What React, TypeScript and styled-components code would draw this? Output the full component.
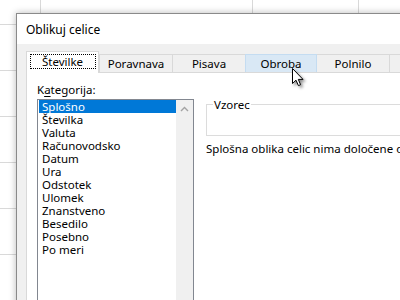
import styled, { createGlobalStyle } from "styled-components";

const GlobalStyle = createGlobalStyle`
  html, body {
    margin: 0;
    padding: 0;
    overflow: hidden;
    background: #ffffff;
  }
  body {
    font-family: "Noto Sans", "DejaVu Sans", sans-serif;
    font-size: 11.5px;
    color: #000000;
  }
`;

const Stage = styled.div`
  position: relative;
  width: 400px;
  height: 300px;
  overflow: hidden;
`;

const Sheet = styled.div`
  display: grid;
  grid-template-columns: 41px 212px 106px 106px;
  grid-template-rows: 25px repeat(6, 46px);
`;

const Cell = styled.div`
  border-right: 1px solid #d9d9d9;
  border-bottom: 1px solid #d9d9d9;
`;

const Window = styled.div`
  position: absolute;
  left: 16px;
  top: 13px;
  width: 430px;
  height: 320px;
  border: 1px solid #8a8a8a;
  background: #f0f0f0;
  box-shadow: 0 0 7px rgba(0, 0, 0, 0.28);
  overflow: hidden;
`;

const TitleBar = styled.div`
  height: 30px;
  background: #ffffff;
  display: flex;
  align-items: center;
  padding-left: 9px;
  font-size: 12px;
`;

const Body = styled.div`
  padding: 7px 0 0 9px;
`;

const TabStrip = styled.div`
  display: flex;
  align-items: flex-end;
  height: 21px;
`;

const Tab = styled.div<{ $w: number; $active?: boolean; $hover?: boolean; $overlap?: boolean }>`
  position: relative;
  flex-shrink: 0;
  box-sizing: border-box;
  width: ${(p) => p.$w}px;
  height: ${(p) => (p.$active ? 22 : 18)}px;
  margin-left: ${(p) => (p.$overlap ? -1 : 0)}px;
  margin-bottom: ${(p) => (p.$active ? -1 : 0)}px;
  z-index: ${(p) => (p.$active ? 2 : p.$hover ? 1 : 0)};
  border: 1px solid ${(p) => (p.$hover ? "#c4dcf1" : "#d9d9d9")};
  border-bottom: none;
  background: ${(p) => (p.$active ? "#ffffff" : p.$hover ? "#d9e8f5" : "#f0f0f0")};
  display: flex;
  align-items: center;
  justify-content: center;
  line-height: 13px;
`;

const FocusRect = styled.span`
  display: flex;
  align-items: center;
  justify-content: center;
  width: 66px;
  height: 15px;
  margin-top: -2px;
  border: 1px dotted #000000;
  box-sizing: border-box;
`;

const Panel = styled.div`
  position: relative;
  z-index: 1;
  height: 300px;
  background: #ffffff;
  border: 1px solid #d9d9d9;
  padding: 10px 0 0 10px;
  display: flex;
  gap: 12px;
`;

const LeftColumn = styled.div`
  display: flex;
  flex-direction: column;
`;

const Label = styled.div`
  line-height: 13px;
  height: 13px;

  u {
    text-decoration: underline;
    text-underline-offset: 2px;
  }
`;

const ListBox = styled.div`
  margin-top: 3px;
  width: 157px;
  height: 220px;
  box-sizing: border-box;
  border: 1px solid #828790;
  display: flex;
`;

const Items = styled.div`
  flex: 1;
  padding-left: 1px;
`;

const Item = styled.div<{ $selected?: boolean }>`
  height: 13px;
  line-height: 13px;
  padding-left: 3px;
  white-space: nowrap;
  background: ${(p) => (p.$selected ? "#0078d7" : "transparent")};
  color: ${(p) => (p.$selected ? "#ffffff" : "#000000")};
`;

const ScrollBar = styled.div`
  width: 17px;
  background: #f0f0f0;
`;

const ScrollButton = styled.div`
  height: 17px;
  display: flex;
  align-items: center;
  justify-content: center;
`;

const RightColumn = styled.div`
  flex: 1;
  display: flex;
  flex-direction: column;
`;

const GroupBox = styled.div`
  margin-top: 21px;
  height: 32px;
  box-sizing: border-box;
  border: 1px solid #dcdcdc;
`;

const Legend = styled.div`
  width: fit-content;
  margin: -7px 0 0 6px;
  padding: 0 1px;
  line-height: 13px;
  background: #ffffff;
`;

const Description = styled.div`
  margin-top: 6px;
  line-height: 13px;
  white-space: nowrap;
`;

const Cursor = styled.svg`
  position: absolute;
  z-index: 10;
  left: 291px;
  top: 67px;
  filter: drop-shadow(2px 2px 1.5px rgba(0, 0, 0, 0.45));
`;

const tabs = [
  { label: "Številke", w: 73 },
  { label: "Poravnava", w: 74 },
  { label: "Pisava", w: 74 },
  { label: "Obroba", w: 72 },
  { label: "Polnilo", w: 74 },
  { label: "Zaščita", w: 76 },
];

const categories = [
  "Splošno",
  "Številka",
  "Valuta",
  "Računovodsko",
  "Datum",
  "Ura",
  "Odstotek",
  "Ulomek",
  "Znanstveno",
  "Besedilo",
  "Posebno",
  "Po meri",
];

export default function App() {
  return (
    <>
      <GlobalStyle />
      <Stage>
        <Sheet>
          {Array.from({ length: 28 }).map((_, i) => (
            <Cell key={i} />
          ))}
        </Sheet>

        <Window>
          <TitleBar>Oblikuj celice</TitleBar>
          <Body>
            <TabStrip>
              {tabs.map((t, i) => (
                <Tab
                  key={t.label}
                  $w={t.w}
                  $active={i === 0}
                  $hover={t.label === "Obroba"}
                  $overlap={i > 1}
                >
                  {i === 0 ? <FocusRect>{t.label}</FocusRect> : t.label}
                </Tab>
              ))}
            </TabStrip>
            <Panel>
              <LeftColumn>
                <Label>
                  K<u>a</u>tegorija:
                </Label>
                <ListBox>
                  <Items>
                    {categories.map((c, i) => (
                      <Item key={c} $selected={i === 0}>
                        {c}
                      </Item>
                    ))}
                  </Items>
                  <ScrollBar>
                    <ScrollButton>
                      <svg width="9" height="6" viewBox="0 0 9 6">
                        <path d="M1 5 L4.5 1.5 L8 5" fill="none" stroke="#a3a3a3" strokeWidth="1.4" />
                      </svg>
                    </ScrollButton>
                  </ScrollBar>
                </ListBox>
              </LeftColumn>
              <RightColumn>
                <GroupBox>
                  <Legend>Vzorec</Legend>
                </GroupBox>
                <Description>Splošna oblika celic nima določene oblike števil.</Description>
              </RightColumn>
            </Panel>
          </Body>
        </Window>

        <Cursor width="14" height="21" viewBox="0 0 14 21">
          <path
            d="M1.5 1.5 L1.5 16.5 L5 13.2 L7.4 18.6 L9.6 17.7 L7.3 12.4 L12 12.4 Z"
            fill="#ffffff"
            stroke="#000000"
            strokeWidth="1"
            strokeLinejoin="miter"
          />
        </Cursor>
      </Stage>
    </>
  );
}
